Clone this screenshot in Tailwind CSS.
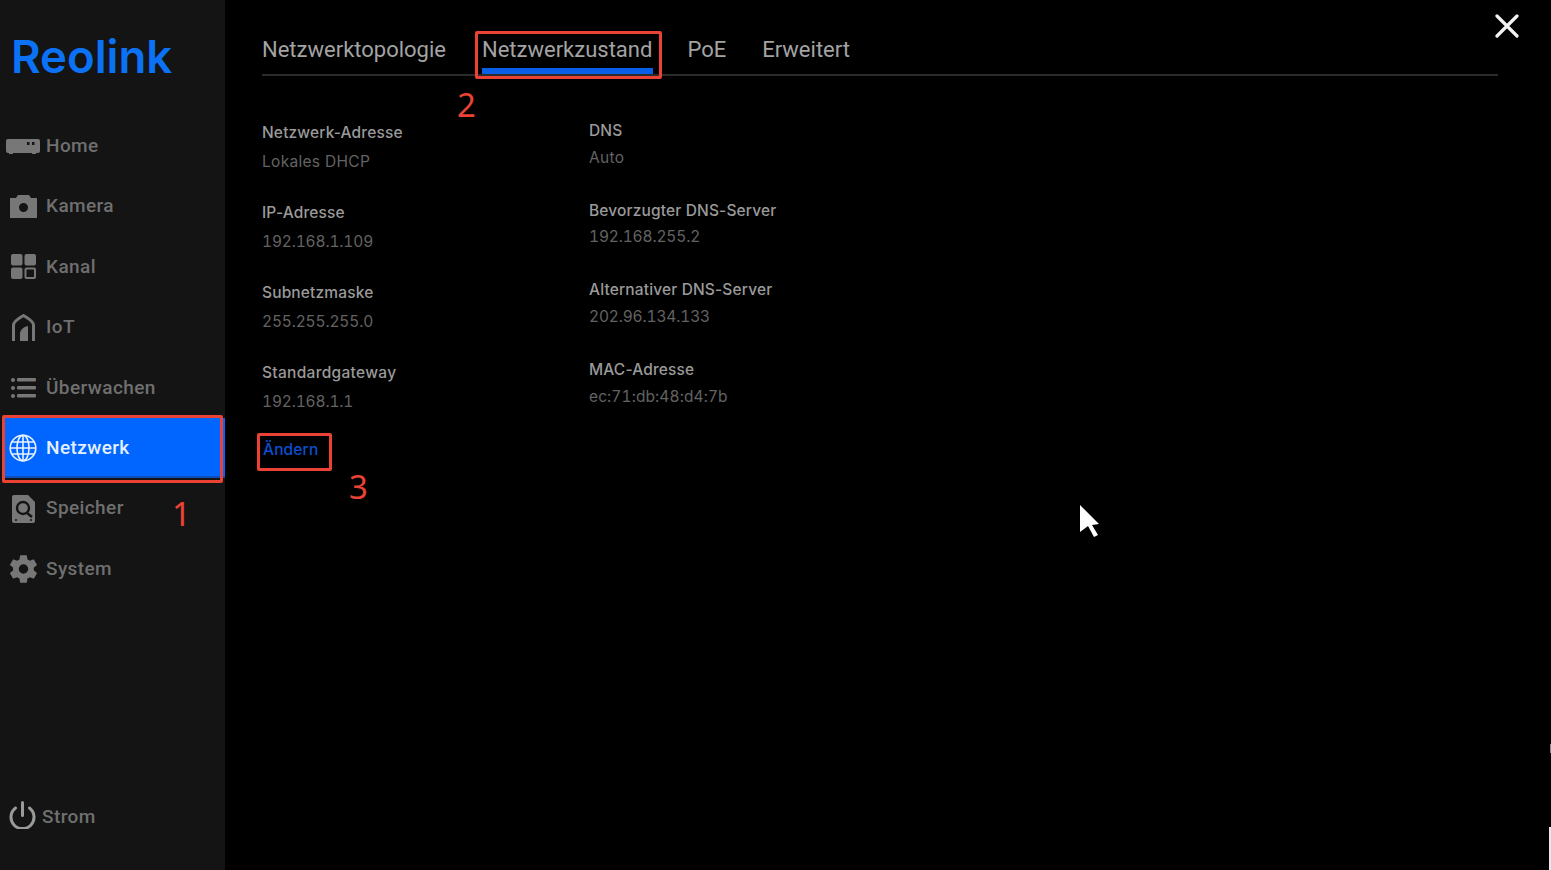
<!DOCTYPE html>
<html lang="de">

<head>
    <meta charset="UTF-8">
    <title>Reolink Netzwerk</title>
    <script src="https://cdn.jsdelivr.net/npm/@tailwindcss/browser@4"></script>
</head>

<body class="bg-black">
    <div class="relative flex h-[870px] w-[1551px] overflow-hidden bg-black font-['Roboto',sans-serif]">

        <!-- sidebar -->
        <aside class="flex h-full w-[225px] shrink-0 flex-col bg-[#141414]">
            <div class="flex h-[116px] items-start pl-[11px] pt-[30px]">
                <span class="font-['Inter',sans-serif] text-[45.500px] leading-[54px] font-semibold text-[#0b72f5]">Reolink</span>
            </div>

            <nav class="flex flex-col text-[19px] font-medium tracking-[0.4px] text-[#6f6f6f]">
                <a class="flex h-[60.4px] items-center">
                    <span class="flex w-[46px] justify-center">
                        <svg class="ml-[-1px] h-[15px] w-[34px]" viewBox="0 0 34 15" fill="#777">
                            <path d="M2 0h30a2 2 0 0 1 2 2v10a2 2 0 0 1-2 2h-2v.500a.500.500 0 0 1-.500.500h-3a.500.500 0 0 1-.500-.500V14H7v.500a.500.500 0 0 1-.500.500h-3a.500.500 0 0 1-.500-.500V14H2a2 2 0 0 1-2-2V2a2 2 0 0 1 2-2z" />
                            <rect x="21" y="3" width="2.500" height="3" fill="#141414" />
                            <rect x="26" y="3" width="2.500" height="3" fill="#141414" />
                        </svg>
                    </span>
                    Home
                </a>
                <a class="flex h-[60.4px] items-center">
                    <span class="flex w-[46px] justify-center">
                        <svg class="h-[23px] w-[27px]" viewBox="0 0 27 23" fill="#777">
                            <path fill-rule="evenodd" d="M0 3h6l2-3h11l2 3h6v20H0zM13.500 8a4.500 4.500 0 1 0 0 9 4.500 4.500 0 0 0 0-9z" />
                        </svg>
                    </span>
                    Kamera
                </a>
                <a class="flex h-[60.4px] items-center">
                    <span class="flex w-[46px] justify-center">
                        <svg class="h-[25px] w-[25px]" viewBox="0 0 25 25" fill="#777">
                            <rect x="0" y="0" width="11.500" height="11.500" rx="2" />
                            <rect x="13.500" y="0" width="11.500" height="11.500" rx="2" />
                            <rect x="0" y="13.500" width="11.500" height="11.500" rx="2" />
                            <rect x="14.500" y="14.500" width="9.500" height="9.500" rx="1" fill="none" stroke="#777" stroke-width="2" />
                        </svg>
                    </span>
                    Kanal
                </a>
                <a class="flex h-[60.4px] items-center">
                    <span class="flex w-[46px] justify-center">
                        <svg class="h-[27px] w-[23px]" viewBox="0 0 23 27" fill="none">
                            <path d="M1.500 27V11C1.500 8 8 3.500 11.500 1.500 15 3.500 21.500 8 21.500 11V27" stroke="#777" stroke-width="3" />
                            <path d="M8 27v-7c0-4 3-7 8-8v15z" fill="#777" />
                        </svg>
                    </span>
                    IoT
                </a>
                <a class="flex h-[60.4px] items-center">
                    <span class="flex w-[46px] justify-center">
                        <svg class="h-[20px] w-[25px]" viewBox="0 0 25 20" fill="#777">
                            <circle cx="2" cy="2" r="2" />
                            <circle cx="2" cy="10" r="2" />
                            <circle cx="2" cy="18" r="2" />
                            <rect x="6" y="0" width="19" height="3.500" rx="1" />
                            <rect x="6" y="8" width="19" height="3.500" rx="1" />
                            <rect x="6" y="16" width="19" height="3.500" rx="1" />
                        </svg>
                    </span>
                    Überwachen
                </a>
                <a class="ml-[3px] flex h-[60.4px] items-center bg-[#0066ff] font-medium text-[#e4f0ff] shadow-[inset_0_-2px_0_#0b4fb8]">
                    <span class="ml-[-3px] flex w-[46px] justify-center">
                        <svg class="h-[28px] w-[28px]" viewBox="0 0 28 28" fill="none" stroke="#e8f2ff" stroke-width="1.600">
                            <circle cx="14" cy="14" r="12.800" />
                            <ellipse cx="14" cy="14" rx="6" ry="12.800" />
                            <path d="M14 1.200v25.600M1.200 14h25.600M3 8h22M3 20h22" />
                        </svg>
                    </span>
                    Netzwerk
                </a>
                <a class="flex h-[60.4px] items-center">
                    <span class="flex w-[46px] justify-center">
                        <svg class="h-[28px] w-[23px]" viewBox="0 0 23 28" fill="none">
                            <path d="M2 0h14l7 7v19a2 2 0 0 1-2 2H2a2 2 0 0 1-2-2V2a2 2 0 0 1 2-2z" fill="#777" />
                            <circle cx="11" cy="13" r="6" stroke="#141414" stroke-width="2.400" />
                            <path d="M15 18l5 4" stroke="#141414" stroke-width="2.400" />
                            <path d="M3 25h2M18 25h2" stroke="#141414" stroke-width="1.500" />
                        </svg>
                    </span>
                    Speicher
                </a>
                <a class="flex h-[60.4px] items-center">
                    <span class="flex w-[46px] justify-center">
                        <svg class="h-[28px] w-[27px]" viewBox="1.900 1.800 19.900 20.400" fill="#777">
                            <path fill-rule="evenodd" d="M19.400 13c.04-.33.06-.66.06-1s-.02-.67-.06-1l2.150-1.680a.5.5 0 0 0 .12-.64l-2.040-3.530a.5.5 0 0 0-.62-.22l-2.540 1.020a7.500 7.500 0 0 0-1.730-1L14.360 2.270A.5.5 0 0 0 13.860 1.850H9.780a.5.5 0 0 0-.5.42L8.900 4.950a7.800 7.800 0 0 0-1.730 1L4.630 4.930a.5.5 0 0 0-.62.22L1.970 8.680a.5.5 0 0 0 .12.640L4.240 11a7.900 7.900 0 0 0 0 2l-2.150 1.680a.5.5 0 0 0-.12.640l2.040 3.530c.13.22.39.31.62.22l2.540-1.020c.53.40 1.110.74 1.730 1l.38 2.680c.04.24.25.42.5.42h4.080c.25 0 .46-.18.5-.42l.38-2.680a7.500 7.500 0 0 0 1.730-1l2.540 1.020c.23.09.49 0 .62-.22l2.040-3.530a.5.5 0 0 0-.12-.64zM11.820 15.500a3.500 3.500 0 1 1 0-7 3.500 3.500 0 0 1 0 7z" />
                        </svg>
                    </span>
                    System
                </a>
            </nav>

            <div class="mt-auto flex h-[70px] items-start pl-[9px] pt-[3px] text-[19px] font-medium tracking-[0.4px] text-[#6f6f6f]">
                <svg class="mr-[6px] mt-[-2px] h-[28px] w-[27px]" viewBox="0 0 27 28" fill="none" stroke="#9a9a9a" stroke-width="3" stroke-linecap="round">
                    <path d="M13.500 1.500v13" />
                    <path d="M6.500 7a11.500 11.500 0 1 0 14 0" />
                </svg>
                <span class="leading-[28px]">Strom</span>
            </div>
        </aside>

        <!-- main -->
        <main class="flex-1 pl-[37px] pr-[53px]">
            <div class="flex h-[76px] border-b-2 border-[#2b2b2b] pt-[33px] text-[22px] leading-[34px] font-normal text-[#a3a3a3]">
                <span class="mr-[36px]">Netzwerktopologie</span>
                <span class="relative mr-[35px]">Netzwerkzustand<span class="absolute top-[35px] right-[-1px] left-0 h-[6px] bg-[#0a5fe8]"></span></span>
                <span class="mr-[36px]">PoE</span>
                <span>Erweitert</span>
            </div>

            <div class="flex font-['Inter',sans-serif] text-[15.500px] tracking-[0.15px]">
                <div class="w-[327px] pt-[46px]">
                    <div class="h-[80px]">
                        <p class="h-[29px] leading-[22px] font-medium text-[#9a9a9a]">Netzwerk-Adresse</p>
                        <p class="leading-[22px] tracking-[0.3px] text-[#636363]">Lokales DHCP</p>
                    </div>
                    <div class="h-[80px]">
                        <p class="h-[29px] leading-[22px] font-medium text-[#9a9a9a]">IP-Adresse</p>
                        <p class="leading-[22px] tracking-[-0.15px] text-[#636363] tabular-nums">192.168.1.109</p>
                    </div>
                    <div class="h-[80px]">
                        <p class="h-[29px] leading-[22px] font-medium text-[#9a9a9a]">Subnetzmaske</p>
                        <p class="leading-[22px] tracking-[-0.15px] text-[#636363] tabular-nums">255.255.255.0</p>
                    </div>
                    <div class="h-[80px]">
                        <p class="h-[29px] leading-[22px] font-medium tracking-[0.3px] text-[#9a9a9a]">Standardgateway</p>
                        <p class="leading-[22px] tracking-[-0.15px] text-[#636363] tabular-nums">192.168.1.1</p>
                    </div>
                    <p class="mt-[-3px] pl-[1px] leading-[22px] font-medium text-[#0a4fd0]">Ändern</p>
                </div>
                <div class="pt-[44px]">
                    <div class="h-[79.700px]">
                        <p class="h-[26.500px] leading-[22px] font-medium text-[#9a9a9a]">DNS</p>
                        <p class="leading-[22px] tracking-[0.3px] text-[#636363]">Auto</p>
                    </div>
                    <div class="h-[79.700px]">
                        <p class="h-[26.500px] leading-[22px] font-medium text-[#9a9a9a]">Bevorzugter DNS-Server</p>
                        <p class="leading-[22px] tracking-[-0.15px] text-[#636363] tabular-nums">192.168.255.2</p>
                    </div>
                    <div class="h-[79.700px]">
                        <p class="h-[26.500px] leading-[22px] font-medium text-[#9a9a9a]">Alternativer DNS-Server</p>
                        <p class="leading-[22px] tracking-[-0.15px] text-[#636363] tabular-nums">202.96.134.133</p>
                    </div>
                    <div class="h-[79.700px]">
                        <p class="h-[26.500px] leading-[22px] font-medium text-[#9a9a9a]">MAC-Adresse</p>
                        <p class="leading-[22px] tracking-[0.1px] text-[#636363] tabular-nums">ec:71:db:48:d4:7b</p>
                    </div>
                </div>
            </div>
        </main>

        <!-- close button -->
        <svg class="absolute top-[14px] left-[1495px] h-[24px] w-[24px]" viewBox="0 0 24 24" stroke="#f2f2f2" stroke-width="3.200" stroke-linecap="round">
            <path d="M2 2l20 20M22 2L2 22" />
        </svg>

        <!-- annotations drawn over the screenshot -->
        <div class="absolute top-[415px] left-[2px] h-[68px] w-[221px] rounded-[2px] border-[3px] border-[#ea4335]"></div>
        <div class="absolute top-[31px] left-[475px] h-[48px] w-[187px] rounded-[2px] border-[3px] border-[#ea4335]"></div>
        <div class="absolute top-[433px] left-[257px] h-[38px] w-[75px] rounded-[2px] border-[3px] border-[#ea4335]"></div>
        <span class="absolute top-[494px] left-[172px] font-['Noto_Sans',sans-serif] text-[33px] leading-[40px] text-[#ea4335]">1</span>
        <span class="absolute top-[85px] left-[457px] font-['Noto_Sans',sans-serif] text-[33px] leading-[40px] text-[#ea4335]">2</span>
        <span class="absolute top-[467px] left-[349px] font-['Noto_Sans',sans-serif] text-[33px] leading-[40px] text-[#ea4335]">3</span>

        <!-- mouse cursor -->
        <svg class="absolute top-[505px] left-[1080px] h-[32px] w-[20px]" viewBox="0 0 20 32" fill="#fff">
            <path d="M0 0l19 19-7 1 6 10-4 2-6-11-8 6z" />
        </svg>

        <!-- stray capture artefact on the right edge -->
        <div class="absolute top-[744px] right-0 h-[9px] w-px bg-[#8a8a8a]"></div>
        <div class="absolute top-[827px] right-0 h-[43px] w-[2px] bg-[#e8e8e8]"></div>
    </div>
</body>

</html>
